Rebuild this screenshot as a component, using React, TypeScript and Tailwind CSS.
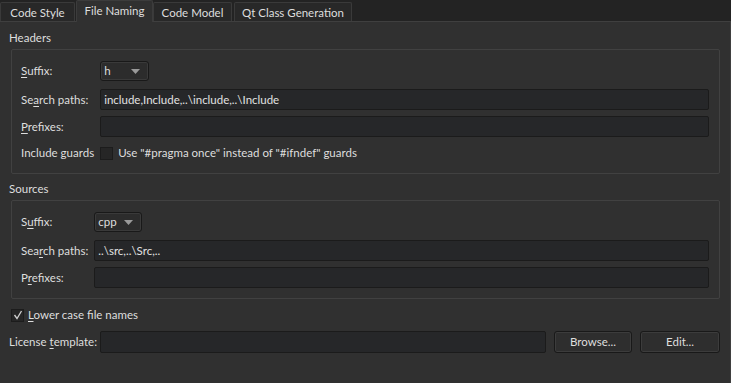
import React from "react";

const font = { fontFamily: "Lato, 'Liberation Sans', sans-serif" };

function U({ pre, u, post }: { pre: string; u: string; post: string }) {
  return (
    <span className="whitespace-nowrap">
      {pre}
      <span className="underline underline-offset-2">{u}</span>
      {post}
    </span>
  );
}

function Combo({ value, w }: { value: string; w: string }) {
  return (
    <div
      className={`h-[20px] ${w} flex items-center justify-between rounded-[3px] border border-[#191919] bg-[#2c2c2c] pl-[3px] pr-[8px] shadow-[inset_0_0_0_1px_#3a3a3a]`}
    >
      <span>{value}</span>
      <svg width="9" height="5" viewBox="0 0 9 5">
        <path d="M0 0 L9 0 L4.5 5 Z" fill="#9a9a9a" />
      </svg>
    </div>
  );
}

function Field({ value = "" }: { value?: string }) {
  return (
    <div className="h-[21px] flex items-center rounded-[2px] border border-[#1b1b1b] bg-[#262729] px-[3px] text-[#e2e2e2]">
      {value}
    </div>
  );
}

function Box({ children }: { children: React.ReactNode }) {
  return (
    <div className="h-[13px] w-[13px] border border-[#1c1c1c] bg-[#262626] flex items-center justify-center">
      {children}
    </div>
  );
}

function Group({
  suffix,
  comboW,
  search,
  labels,
  guards,
}: {
  suffix: string;
  comboW: string;
  search: string;
  labels: React.ReactNode[];
  guards?: boolean;
}) {
  return (
    <div className="mx-[2px] border border-[#414141] rounded-[2px] pt-[11px] pb-[10px] pl-[9px] pr-[10px]">
      <div className="grid grid-cols-[auto_1fr] gap-x-[6px] items-center">
        <div className="h-[20px] flex items-center">{labels[0]}</div>
        <div className="flex">
          <Combo value={suffix} w={comboW} />
        </div>
        <div className="h-[21px] mt-[8px] flex items-center">{labels[1]}</div>
        <div className="mt-[8px]">
          <Field value={search} />
        </div>
        <div className="h-[21px] mt-[6px] flex items-center">{labels[2]}</div>
        <div className="mt-[6px]">
          <Field />
        </div>
        {guards && (
          <>
            <div className="h-[20px] mt-[6px] flex items-center whitespace-nowrap">Include guards</div>
            <div className="h-[20px] mt-[6px] flex items-center gap-[5px]">
              <Box>{null}</Box>
              <span>Use "#pragma once" instead of "#ifndef" guards</span>
            </div>
          </>
        )}
      </div>
    </div>
  );
}

function Tab({ label, selected, w }: { label: string; selected?: boolean; w: string }) {
  if (selected) {
    return (
      <div
        className={`${w} h-[22px] -mb-[1px] flex justify-center items-start pt-[2px] bg-[#303030] border-x border-t border-[#3c3c3c] rounded-t-[2px] relative z-10`}
      >
        {label}
      </div>
    );
  }
  return (
    <div
      className={`${w} h-[19px] flex justify-center items-center pt-[2px] bg-[#282828] border-x border-t border-[#3a3a3a] rounded-t-[2px]`}
    >
      {label}
    </div>
  );
}

export default function App() {
  return (
    <div
      style={font}
      className="w-[731px] h-[383px] bg-[#232323] text-[#dedede] text-[11.5px] leading-[16px] flex flex-col overflow-hidden"
    >
      <div className="h-[21px] flex items-end shrink-0">
        <Tab label="Code Style" w="w-[75px]" />
        <div className="ml-[1px]">
          <Tab label="File Naming" selected w="w-[77px]" />
        </div>
        <Tab label="Code Model" w="w-[79px]" />
        <div className="ml-[2px]">
          <Tab label="Qt Class Generation" w="w-[118px]" />
        </div>
      </div>
      <div className="flex-1 bg-[#303030] border-t border-r border-[#3f3f3f] pl-[9px] pr-[8px] pt-[8px]">
        <div className="h-[16px]">Headers</div>
        <div className="mt-[3px]">
          <Group
            suffix="h"
            comboW="w-[49px]"
            search="include,Include,..\include,..\Include"
            guards
            labels={[
              <U pre="" u="S" post="uffix:" />,
              <U pre="Se" u="a" post="rch paths:" />,
              <U pre="" u="P" post="refixes:" />,
            ]}
          />
        </div>
        <div className="h-[16px] mt-[7px]">Sources</div>
        <div className="mt-[3px]">
          <Group
            suffix="cpp"
            comboW="w-[48px]"
            search="..\src,..\Src,.."
            labels={[
              <U pre="S" u="u" post="ffix:" />,
              <U pre="Sea" u="r" post="ch paths:" />,
              <U pre="P" u="r" post="efixes:" />,
            ]}
          />
        </div>
        <div className="h-[20px] mt-[6px] ml-[2px] flex items-center gap-[4px]">
          <Box>
            <svg width="10" height="10" viewBox="0 0 10 10">
              <path d="M1.5 5 L4 8.5 L8.5 1" stroke="#cfcfcf" strokeWidth="1.3" fill="none" />
            </svg>
          </Box>
          <U pre="" u="L" post="ower case file names" />
        </div>
        <div className="mt-[6px] flex items-center pr-[2px]">
          <div className="w-[91px] shrink-0">
            <U pre="License " u="t" post="emplate:" />
          </div>
          <div className="flex-1 h-[22px] rounded-[2px] border border-[#1b1b1b] bg-[#262729]" />
          <button className="ml-[8px] w-[78px] h-[22px] rounded-[3px] border border-[#191919] bg-[#2e2e2e] shadow-[inset_0_0_0_1px_#3c3c3c]">
            Browse...
          </button>
          <button className="ml-[8px] w-[80px] h-[22px] rounded-[3px] border border-[#191919] bg-[#2e2e2e] shadow-[inset_0_0_0_1px_#3c3c3c]">
            Edit...
          </button>
        </div>
      </div>
    </div>
  );
}
